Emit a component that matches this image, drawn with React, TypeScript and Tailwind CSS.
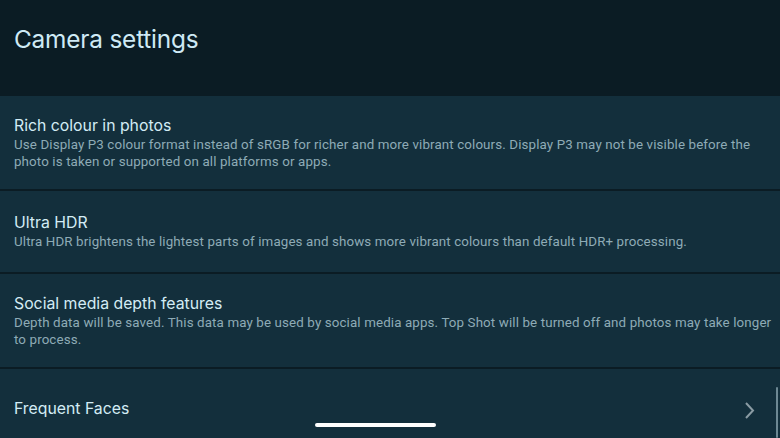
import React from 'react'

const items = [
  {
    title: 'Rich colour in photos',
    lines: [
      'Use Display P3 colour format instead of sRGB for richer and more vibrant colours. Display P3 may not be visible before the',
      'photo is taken or supported on all platforms or apps.',
    ],
    h: 'h-[93px]',
  },
  {
    title: 'Ultra HDR',
    lines: ['Ultra HDR brightens the lightest parts of images and shows more vibrant colours than default HDR+ processing.'],
    h: 'h-[81px]',
  },
  {
    title: 'Social media depth features',
    lines: [
      'Depth data will be saved. This data may be used by social media apps. Top Shot will be turned off and photos may take longer',
      'to process.',
    ],
    h: 'h-[93px]',
  },
]

export default function App() {
  return (
    <div className="relative w-[780px] h-[438px] overflow-hidden bg-[#0b1c24] font-['Open_Sans',sans-serif]">
      <header className="h-[96px] flex items-center px-[14px] pb-[18px]">
        <h1 className="text-[24.4px] text-[#cfeaf5] tracking-[-0.2px] font-['Inter',sans-serif]">Camera settings</h1>
      </header>

      <div className="flex flex-col gap-[2px]">
        {items.map(it => (
          <div key={it.title} className={`${it.h} bg-[#132f3c] flex flex-col justify-center px-[14px]`}>
            <div className="text-[15.8px] leading-[20px] text-[#d3ecf5] font-['Inter',sans-serif]">{it.title}</div>
            {it.lines.map(l => (
              <div key={l} className="text-[13.35px] leading-[17px] tracking-[0.12px] text-[#8eabb6] font-['Roboto',sans-serif] whitespace-nowrap">
                {l}
              </div>
            ))}
          </div>
        ))}

        <div className="h-[88px] bg-[#132f3c] flex items-start pt-[30px] px-[14px] justify-between">
          <div className="text-[15.8px] leading-[20px] text-[#d3ecf5] font-['Inter',sans-serif]">Frequent Faces</div>
          <svg width="14" height="20" viewBox="0 0 14 20" className="mr-[9px] mt-[2px]">
            <path d="M3 2 L10 9.5 L3 17" fill="none" stroke="#8a9ba3" strokeWidth="2" />
          </svg>
        </div>
      </div>

      {/* scrollbar */}
      <div className="absolute left-[776px] top-[387px] w-[2px] h-[51px] bg-[#6d8893] rounded-full" />
      {/* home indicator */}
      <div className="absolute left-[315px] top-[423px] w-[121px] h-[4px] bg-white rounded-full" />
    </div>
  )
}
